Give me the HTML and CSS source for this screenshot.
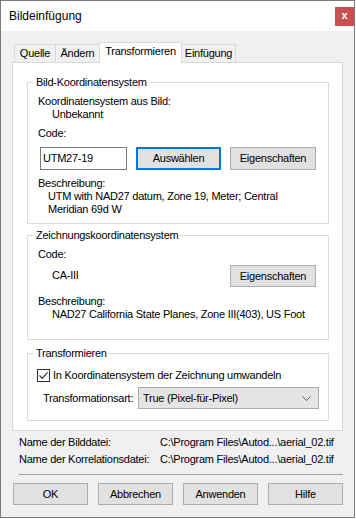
FILE: index.html
```html
<!DOCTYPE html>
<html lang="de">
<head>
<meta charset="utf-8">
<title>Bildeinfügung</title>
<link rel="stylesheet" href="styles.css">
</head>
<body>
<div class="window">
  <div class="titlebar">
    <span class="title">Bildeinfügung</span>
    <span class="close">x</span>
  </div>
  <div class="content">
    <div class="tabs">
      <div class="tab tab-quelle">Quelle</div>
      <div class="tab tab-aendern">Ändern</div>
      <div class="tab tab-trans active">Transformieren</div>
      <div class="tab tab-einf">Einfügung</div>
    </div>
    <div class="panel">
      <fieldset class="group g1">
        <legend>Bild-Koordinatensystem</legend>
        <div class="gbody">
          <div class="line">Koordinatensystem aus Bild:</div>
          <div class="line indent">Unbekannt</div>
          <div class="line mt6">Code:</div>
          <div class="row mt7">
            <div class="input">UTM27-19</div>
            <div class="btn btn-default btn-select">Auswählen</div>
            <div class="btn btn-props">Eigenschaften</div>
          </div>
          <div class="line mt7">Beschreibung:</div>
          <div class="desc desc-utm">UTM with NAD27 datum, Zone 19, Meter; Central Meridian 69d W</div>
        </div>
      </fieldset>
      <fieldset class="group g2">
        <legend>Zeichnungskoordinatensystem</legend>
        <div class="gbody">
          <div class="line mt6">Code:</div>
          <div class="row row-code mt3">
            <div class="line indent">CA-III</div>
            <div class="btn btn-props push">Eigenschaften</div>
          </div>
          <div class="line mt8">Beschreibung:</div>
          <div class="line indent">NAD27 California State Planes, Zone III(403), US Foot</div>
        </div>
      </fieldset>
      <fieldset class="group g3">
        <legend>Transformieren</legend>
        <div class="gbody">
          <div class="check-row">
            <span class="checkbox">
              <svg width="11" height="11" viewBox="0 0 11 11"><path d="M1.5 5.5 L4.2 8.3 L9.6 2.4" fill="none" stroke="#333" stroke-width="1.2"/></svg>
            </span>
            <span class="check-label">In Koordinatensystem der Zeichnung umwandeln</span>
          </div>
          <div class="combo-row">
            <span class="combo-label">Transformationsart:</span>
            <div class="combo">
              <span>True (Pixel-für-Pixel)</span>
              <svg class="chev" width="9" height="5" viewBox="0 0 9 5"><path d="M0.5 0.5 L4.5 4.5 L8.5 0.5" fill="none" stroke="#606060" stroke-width="1"/></svg>
            </div>
          </div>
        </div>
      </fieldset>
    </div>
    <div class="info">
      <span>Name der Bilddatei:</span><span>C:\Program Files\Autod...\aerial_02.tif</span>
      <span>Name der Korrelationsdatei:</span><span>C:\Program Files\Autod...\aerial_02.tif</span>
    </div>
    <div class="separator"></div>
    <div class="buttons">
      <div class="btn btn-foot">OK</div>
      <div class="btn btn-foot">Abbrechen</div>
      <div class="btn btn-foot">Anwenden</div>
      <div class="btn btn-foot">Hilfe</div>
    </div>
  </div>
</div>
</body>
</html>
```
FILE: styles.css
```css
* { box-sizing: border-box; }
html, body { margin: 0; padding: 0; background: #ffffff; }
body {
  font-family: "Liberation Sans", Arial, sans-serif;
  font-size: 11px;
  letter-spacing: -0.25px;
  color: #000;
}
.window {
  width: 355px;
  height: 518px;
  border: 1px solid #7a7a7a;
  background: #f0f0f0;
  display: flex;
  flex-direction: column;
}
.titlebar {
  height: 30px;
  background: #fff;
  display: flex;
  align-items: flex-start;
  justify-content: space-between;
  padding-left: 8px;
  flex-shrink: 0;
}
.title {
  font-size: 12px;
  letter-spacing: 0;
  line-height: 30px;
}
.close {
  width: 19px;
  height: 19px;
  margin-top: 6px;
  background: #c75050;
  color: #fff;
  font-weight: bold;
  font-size: 11px;
  line-height: 17px;
  text-align: center;
  letter-spacing: 0;
}
.content {
  padding: 11px 11px 0 11px;
  display: flex;
  flex-direction: column;
}
.tabs {
  display: flex;
  align-items: flex-end;
  padding-left: 2px;
  position: relative;
  z-index: 1;
}
.tab {
  height: 18px;
  border: 1px solid #d9d9d9;
  border-bottom: none;
  background: #f0f0f0;
  text-align: center;
  line-height: 17px;
  margin-left: -1px;
}
.tab:first-child { margin-left: 0; }
.tab-quelle { width: 42px; }
.tab-aendern { width: 45px; }
.tab-trans { width: 83px; }
.tab-einf { width: 55px; }
.tab.active {
  height: 21px;
  background: #fff;
  margin-bottom: -1px;
  line-height: 17px;
  position: relative;
  z-index: 2;
}
.panel {
  background: #fff;
  border: 1px solid #d9d9d9;
  padding: 13px 13px 9px 14px;
  display: flex;
  flex-direction: column;
}
.group {
  margin: 0;
  padding: 0;
  border: 1px solid #dcdcdc;
  min-width: 0;
}
.group legend {
  margin-left: 6px;
  padding: 0 2px;
  line-height: 13px;
  height: 13px;
}
.g2 { margin-top: 5px; }
.g3 { margin-top: 7px; }
.gbody {
  padding: 0 12px 0 10px;
  display: flex;
  flex-direction: column;
}
.g1 .gbody { padding-top: 6px; padding-bottom: 7px; }
.g2 .gbody { padding-bottom: 18px; }
.g3 .gbody { padding-top: 9px; padding-bottom: 11px; }
.line { line-height: 13px; height: 13px; white-space: nowrap; }
.indent { padding-left: 14px; }
.mt3 { margin-top: 3px; }
.mt6 { margin-top: 6px; }
.mt7 { margin-top: 7px; }
.mt8 { margin-top: 8px; }
.row {
  display: flex;
  align-items: center;
  height: 23px;
}
.input {
  width: 87px;
  height: 23px;
  margin-left: 2px;
  border: 1px solid #7a7a7a;
  background: #fff;
  line-height: 21px;
  padding-left: 2px;
}
.btn {
  height: 23px;
  background: #e1e1e1;
  border: 1px solid #adadad;
  text-align: center;
  line-height: 21px;
}
.btn-select {
  width: 85px;
  margin-left: 9px;
  border: 2px solid #0078d7;
  line-height: 19px;
}
.btn-props {
  width: 86px;
  margin-left: 9px;
}
.push { margin-left: auto; height: 22px; line-height: 20px; }
.desc {
  padding-left: 10px;
  width: 260px;
  line-height: 13px;
}
.check-row {
  display: flex;
  align-items: center;
  height: 13px;
}
.checkbox {
  width: 13px;
  height: 13px;
  margin-left: -1px;
  border: 1px solid #333;
  background: #fff;
  display: flex;
  align-items: center;
  justify-content: center;
}
.check-label { margin-left: 3px; line-height: 13px; }
.combo-row {
  display: flex;
  align-items: center;
  margin-top: 5px;
  height: 22px;
}
.combo-label { padding-left: 5px; }
.combo {
  margin-left: auto;
  margin-right: -3px;
  width: 181px;
  height: 22px;
  background: #e5e5e5;
  border: 1px solid #acacac;
  display: flex;
  align-items: center;
  justify-content: space-between;
  padding: 0 7px 0 4px;
}
.info {
  display: grid;
  grid-template-columns: 141px auto;
  row-gap: 4px;
  padding-left: 7px;
  margin-top: 5px;
  line-height: 13px;
}
.separator {
  margin: 8px 0 0 7px;
  height: 1px;
  background: #a0a0a0;
}
.buttons {
  display: flex;
  justify-content: space-between;
  margin: 8px 0 0 1px;
}
.btn-foot {
  width: 75px;
  height: 22px;
  line-height: 20px;
}
```
